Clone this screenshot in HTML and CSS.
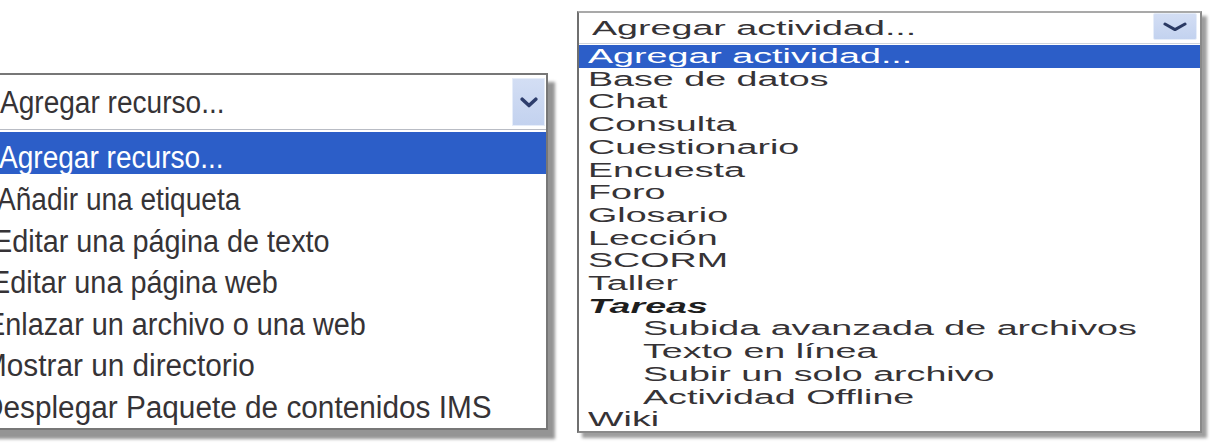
FILE: index.html
```html
<!DOCTYPE html>
<html lang="es">
<head>
<meta charset="utf-8">
<title>Agregar recurso / actividad</title>
<link rel="stylesheet" href="styles.css">
</head>
<body>
<main class="stage">
  <div class="combo combo-recurso">
    <div class="combo-field">
      <span class="combo-value"><span class="txt">Agregar recurso...</span></span>
      <span class="combo-btn">
        <svg width="18" height="11" viewBox="0 0 18 11"><path d="M2.2 2.2 L9 8.6 L15.8 2.2" fill="none" stroke="#2d3d6c" stroke-width="3.5" stroke-linecap="round" stroke-linejoin="round"/></svg>
      </span>
    </div>
    <ul class="combo-list">
      <li class="is-selected"><span class="txt">Agregar recurso...</span></li>
      <li><span class="txt">Añadir una etiqueta</span></li>
      <li><span class="txt">Editar una página de texto</span></li>
      <li><span class="txt">Editar una página web</span></li>
      <li><span class="txt">Enlazar un archivo o una web</span></li>
      <li><span class="txt">Mostrar un directorio</span></li>
      <li><span class="txt">Desplegar Paquete de contenidos IMS</span></li>
    </ul>
  </div>

  <div class="combo combo-actividad">
    <div class="combo-field">
      <span class="combo-value"><span class="txt">Agregar actividad...</span></span>
      <span class="combo-btn">
        <svg width="24" height="10" viewBox="0 0 24 10"><path d="M2 2 L12 7.6 L22 2" fill="none" stroke="#2a3963" stroke-width="3" stroke-linecap="round" stroke-linejoin="round"/></svg>
      </span>
    </div>
    <ul class="combo-list">
      <li class="is-selected"><span class="txt">Agregar actividad...</span></li>
      <li><span class="txt">Base de datos</span></li>
      <li><span class="txt">Chat</span></li>
      <li><span class="txt">Consulta</span></li>
      <li><span class="txt">Cuestionario</span></li>
      <li><span class="txt">Encuesta</span></li>
      <li><span class="txt">Foro</span></li>
      <li><span class="txt">Glosario</span></li>
      <li><span class="txt">Lección</span></li>
      <li><span class="txt">SCORM</span></li>
      <li><span class="txt">Taller</span></li>
      <li class="group"><span class="txt">Tareas</span></li>
      <li class="sub"><span class="txt">Subida avanzada de archivos</span></li>
      <li class="sub"><span class="txt">Texto en línea</span></li>
      <li class="sub"><span class="txt">Subir un solo archivo</span></li>
      <li class="sub"><span class="txt">Actividad Offline</span></li>
      <li><span class="txt">Wiki</span></li>
    </ul>
  </div>
</main>
</body>
</html>
```

FILE: styles.css
```css
html, body {
  margin: 0;
  padding: 0;
  background: #ffffff;
}

.stage {
  display: flex;
  align-items: flex-start;
  width: 1210px;
  height: 446px;
  overflow: hidden;
  font-family: "Liberation Sans", Arial, sans-serif;
  color: #363336;
}

.combo {
  box-sizing: border-box;
  background: #ffffff;
  flex: none;
}

.combo ul {
  list-style: none;
  margin: 0;
  padding: 0;
}

.combo .txt {
  display: inline-block;
  white-space: nowrap;
  text-indent: 0;
  transform-origin: 0 50%;
}

.combo-field {
  display: flex;
  align-items: flex-start;
  justify-content: space-between;
}

.combo-value {
  flex: 1;
  white-space: nowrap;
}

.combo-btn {
  display: flex;
  align-items: center;
  justify-content: center;
  box-sizing: border-box;
  background: linear-gradient(#d3def4, #c3d2ef);
  border: 1px solid #e6edf9;
}

.combo-list li {
  white-space: nowrap;
}

.combo-list .is-selected {
  background: #2c5ec8;
  color: #ffffff;
}

/* ---- resource picker (left) ---- */
.combo-recurso {
  width: 562px;
  margin-left: -14px;
  margin-top: 73px;
  border: 2px solid #777777;
  border-left-color: #cfcfcf;
  box-shadow: 7px 9px 3px rgba(0, 0, 0, 0.42);
  font-size: 31px;
}

.combo-recurso .txt {
  transform: scaleX(0.905);
}

.combo-recurso .combo-field {
  height: 55px;
  border-bottom: 1px solid #b9bcc4;
  box-sizing: border-box;
}

.combo-recurso .combo-value {
  padding-left: 12px;
  line-height: 55px;
}

.combo-recurso .combo-btn {
  width: 33px;
  height: 48px;
  margin-top: 3px;
  margin-right: 1px;
}

.combo-recurso .combo-list {
  padding: 2px 0 5px;
}

/* rows: 41.5px pitch, text sitting low in each row */
.combo-recurso .combo-list li {
  height: 41.5px;
  box-sizing: border-box;
  padding-top: 10px;
  line-height: 31.5px;
  padding-left: 9px;
}

.combo-recurso .combo-list .is-selected {
  height: 42px;
  line-height: 32px;
  padding-left: 11px;
}

/* the lower entries drift to the left edge and run a little wider */
.combo-recurso .combo-list li:nth-child(3) { text-indent: -4px; }
.combo-recurso .combo-list li:nth-child(4) { text-indent: -6px; }
.combo-recurso .combo-list li:nth-child(5) { text-indent: -11px; }
.combo-recurso .combo-list li:nth-child(6) { text-indent: -15px; }
.combo-recurso .combo-list li:nth-child(7) { text-indent: -15px; }

.combo-recurso .combo-list li:nth-child(3) .txt,
.combo-recurso .combo-list li:nth-child(4) .txt,
.combo-recurso .combo-list li:nth-child(5) .txt {
  transform: scaleX(0.93);
}

.combo-recurso .combo-list li:nth-child(6) .txt,
.combo-recurso .combo-list li:nth-child(7) .txt {
  transform: scaleX(0.96);
}

/* ---- activity picker (right) ---- */
.combo-actividad {
  width: 625px;
  margin-left: 29px;
  margin-top: 11px;
  border: 2px solid #8a8a8a;
  border-top-color: #a9a9a9;
  border-left-color: #6f6f6f;
  box-shadow: 5px 5px 3px rgba(0, 0, 0, 0.38);
  font-size: 19.5px;
}

.combo-actividad .txt {
  transform: scaleX(1.93);
}

.combo-actividad .combo-field {
  height: 31px;
  border-bottom: 1px solid #d0d4dc;
  box-sizing: border-box;
}

.combo-actividad .combo-value {
  padding-left: 13px;
  line-height: 31px;
}

.combo-actividad .combo-btn {
  width: 44px;
  height: 27px;
  margin-right: 3px;
  border-radius: 2px;
}

.combo-actividad .combo-list {
  padding-top: 1px;
}

.combo-actividad .combo-list li {
  line-height: 22.7px;
  padding-left: 9px;
}

.combo-actividad .combo-list .group {
  font-weight: bold;
  font-style: italic;
  color: #1e1e1e;
}

.combo-actividad .combo-list .sub {
  padding-left: 64px;
}
```
